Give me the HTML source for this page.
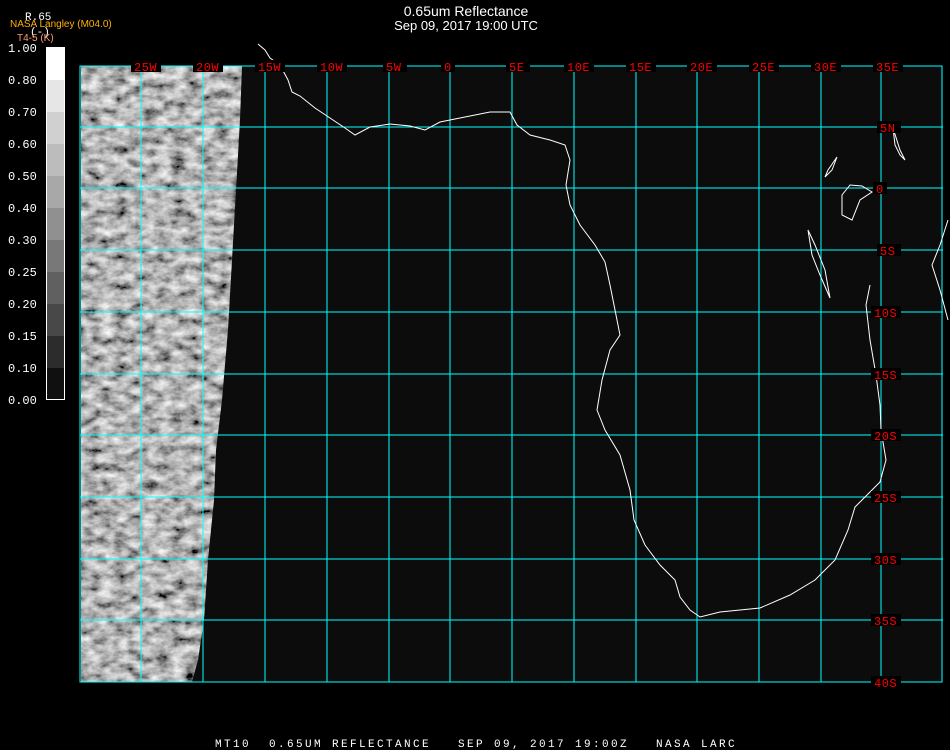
<!DOCTYPE html>
<html><head><meta charset="utf-8"><style>
html,body{margin:0;padding:0;background:#000;width:950px;height:750px;overflow:hidden}
</style></head><body>
<svg width="950" height="750" xmlns="http://www.w3.org/2000/svg" style="position:absolute;left:0;top:0">
<defs>
<filter id="g" x="0" y="0" width="100%" height="100%">
<feTurbulence type="fractalNoise" baseFrequency="0.07 0.11" numOctaves="5" seed="11" result="t"/>
<feColorMatrix in="t" type="matrix" values="1.3 0 0 0 -0.2  1.3 0 0 0 -0.2  1.3 0 0 0 -0.2  0 0 0 0 1"/>
</filter>
<clipPath id="cl"><path d="M81,66 L242,66 L240,120 L236,190 L232,260 L228,330 L222,400 L216,450 L214,500 L208,560 L204,620 L198,660 L192,682 L81,682 Z"/></clipPath>
</defs>
<rect x="80" y="66" width="863" height="616" fill="#0c0c0c"/>
<g clip-path="url(#cl)"><rect x="80" y="66" width="170" height="616" filter="url(#g)"/></g>
<g stroke="#00ffff" stroke-width="1" fill="none" shape-rendering="crispEdges">
<rect x="80" y="66" width="862" height="616"/>
<line x1="141" y1="66" x2="141" y2="682"/><line x1="203" y1="66" x2="203" y2="682"/>
<line x1="265" y1="66" x2="265" y2="682"/><line x1="327" y1="66" x2="327" y2="682"/>
<line x1="389" y1="66" x2="389" y2="682"/><line x1="450" y1="66" x2="450" y2="682"/>
<line x1="512" y1="66" x2="512" y2="682"/><line x1="574" y1="66" x2="574" y2="682"/>
<line x1="636" y1="66" x2="636" y2="682"/><line x1="697" y1="66" x2="697" y2="682"/>
<line x1="759" y1="66" x2="759" y2="682"/><line x1="821" y1="66" x2="821" y2="682"/>
<line x1="881" y1="66" x2="881" y2="682"/>
<line x1="80" y1="127" x2="943" y2="127"/><line x1="80" y1="188" x2="943" y2="188"/>
<line x1="80" y1="250" x2="943" y2="250"/><line x1="80" y1="312" x2="943" y2="312"/>
<line x1="80" y1="374" x2="943" y2="374"/><line x1="80" y1="435" x2="943" y2="435"/>
<line x1="80" y1="497" x2="943" y2="497"/><line x1="80" y1="559" x2="943" y2="559"/>
<line x1="80" y1="620" x2="943" y2="620"/>
</g>
<g stroke="#fff" stroke-width="1" fill="none">
<path d="M258,44 L265,50 L270,58 L280,65 L288,80 L292,92 L300,96 L315,108 L330,118 L345,128 L355,135 L370,127 L390,124 L410,126 L425,130 L440,122 L460,118 L490,112 L510,112 L517,125 L530,135 L550,140 L565,145 L570,160 L566,185 L570,205 L580,225 L595,245 L605,262 L610,285 L615,310 L620,335 L610,350 L602,380 L597,410 L605,430 L620,455 L630,490 L634,520 L645,545 L660,565 L675,580 L680,597 L690,610 L700,617 L720,612 L760,608 L790,595 L815,580 L835,560 L848,530 L855,507 L865,497 L880,482 L886,460 L881,430 L880,405 L876,375 L870,340 L866,305 L870,285"/>
<path d="M948,220 L940,245 L932,265 L940,290 L948,320"/>
<path d="M893,128 L895,145 L900,155 L905,160 L900,150 Z"/>
<path d="M837,157 L828,170 L825,177 L832,170 Z"/>
<path d="M808,230 L812,255 L820,275 L830,298 L825,270 L815,245 Z"/>
<path d="M842,195 L850,185 L862,186 L872,192 L860,200 L852,220 L842,215 Z"/>
</g>
<g fill="#000">
<rect x="131" y="60" width="30" height="12"/><rect x="193" y="60" width="30" height="12"/><rect x="255" y="60" width="30" height="12"/>
<rect x="317" y="60" width="30" height="12"/><rect x="383" y="60" width="24" height="12"/><rect x="441" y="60" width="14" height="12"/>
<rect x="506" y="60" width="24" height="12"/><rect x="564" y="60" width="30" height="12"/><rect x="626" y="60" width="30" height="12"/>
<rect x="687" y="60" width="30" height="12"/><rect x="749" y="60" width="30" height="12"/><rect x="811" y="60" width="30" height="12"/><rect x="873" y="60" width="30" height="12"/>
<rect x="877" y="121" width="24" height="12"/><rect x="873" y="182" width="14" height="12"/><rect x="877" y="244" width="24" height="12"/>
<rect x="871" y="306" width="30" height="12"/><rect x="871" y="368" width="30" height="12"/><rect x="871" y="429" width="30" height="12"/>
<rect x="871" y="491" width="30" height="12"/><rect x="871" y="553" width="30" height="12"/><rect x="871" y="614" width="30" height="12"/><rect x="871" y="676" width="30" height="12"/>
</g>
<g font-family="Liberation Mono, monospace" font-size="12" fill="#ff0000" letter-spacing="0.5">
<text x="134" y="71">25W</text><text x="196" y="71">20W</text><text x="258" y="71">15W</text>
<text x="320" y="71">10W</text><text x="386" y="71">5W</text><text x="444" y="71">0</text>
<text x="509" y="71">5E</text><text x="567" y="71">10E</text><text x="629" y="71">15E</text>
<text x="690" y="71">20E</text><text x="752" y="71">25E</text><text x="814" y="71">30E</text><text x="876" y="71">35E</text>
<text x="880" y="132">5N</text><text x="876" y="193">0</text><text x="880" y="255">5S</text>
<text x="874" y="317">10S</text><text x="874" y="379">15S</text><text x="874" y="440">20S</text>
<text x="874" y="502">25S</text><text x="874" y="564">30S</text><text x="874" y="625">35S</text><text x="874" y="687">40S</text>
</g>
<g>
<rect x="46" y="47" width="18" height="33" fill="#ffffff"/>
<rect x="46" y="80" width="18" height="32" fill="#e6e6e6"/>
<rect x="46" y="112" width="18" height="32" fill="#d0d0d0"/>
<rect x="46" y="144" width="18" height="32" fill="#bcbcbc"/>
<rect x="46" y="176" width="18" height="32" fill="#a8a8a8"/>
<rect x="46" y="208" width="18" height="32" fill="#909090"/>
<rect x="46" y="240" width="18" height="32" fill="#787878"/>
<rect x="46" y="272" width="18" height="32" fill="#606060"/>
<rect x="46" y="304" width="18" height="32" fill="#484848"/>
<rect x="46" y="336" width="18" height="32" fill="#2c2c2c"/>
<rect x="46" y="368" width="18" height="32" fill="#101010"/>
<rect x="46.5" y="47.5" width="18" height="352" fill="none" stroke="#fff"/>
</g>
<g font-family="Liberation Mono, monospace" font-size="12" fill="#fff">
<text x="8" y="52">1.00</text><text x="8" y="84">0.80</text><text x="8" y="116">0.70</text>
<text x="8" y="148">0.60</text><text x="8" y="180">0.50</text><text x="8" y="212">0.40</text>
<text x="8" y="244">0.30</text><text x="8" y="276">0.25</text><text x="8" y="308">0.20</text>
<text x="8" y="340">0.15</text><text x="8" y="372">0.10</text><text x="8" y="404">0.00</text>
<text x="25" y="20" font-size="11">R.65</text><text x="30" y="35" font-size="11">(-)</text>
</g>
<text x="10" y="27" font-family="Liberation Sans, sans-serif" font-size="10" fill="#ffb000">NASA Langley (M04.0)</text>
<text x="17" y="41" font-family="Liberation Sans, sans-serif" font-size="10" fill="#ff9a6a">T4-5 (K)</text>
<text x="466" y="16" text-anchor="middle" font-family="Liberation Sans, sans-serif" font-size="14" fill="#fff">0.65um Reflectance</text>
<text x="466" y="30" text-anchor="middle" font-family="Liberation Sans, sans-serif" font-size="13" fill="#fff">Sep 09, 2017 19:00 UTC</text>
<text x="215" y="747" font-family="Liberation Mono, monospace" font-size="11" fill="#fff" letter-spacing="2.4" xml:space="preserve">MT10  0.65UM REFLECTANCE   SEP 09, 2017 19:00Z   NASA LARC</text>
</svg>
</body></html>
